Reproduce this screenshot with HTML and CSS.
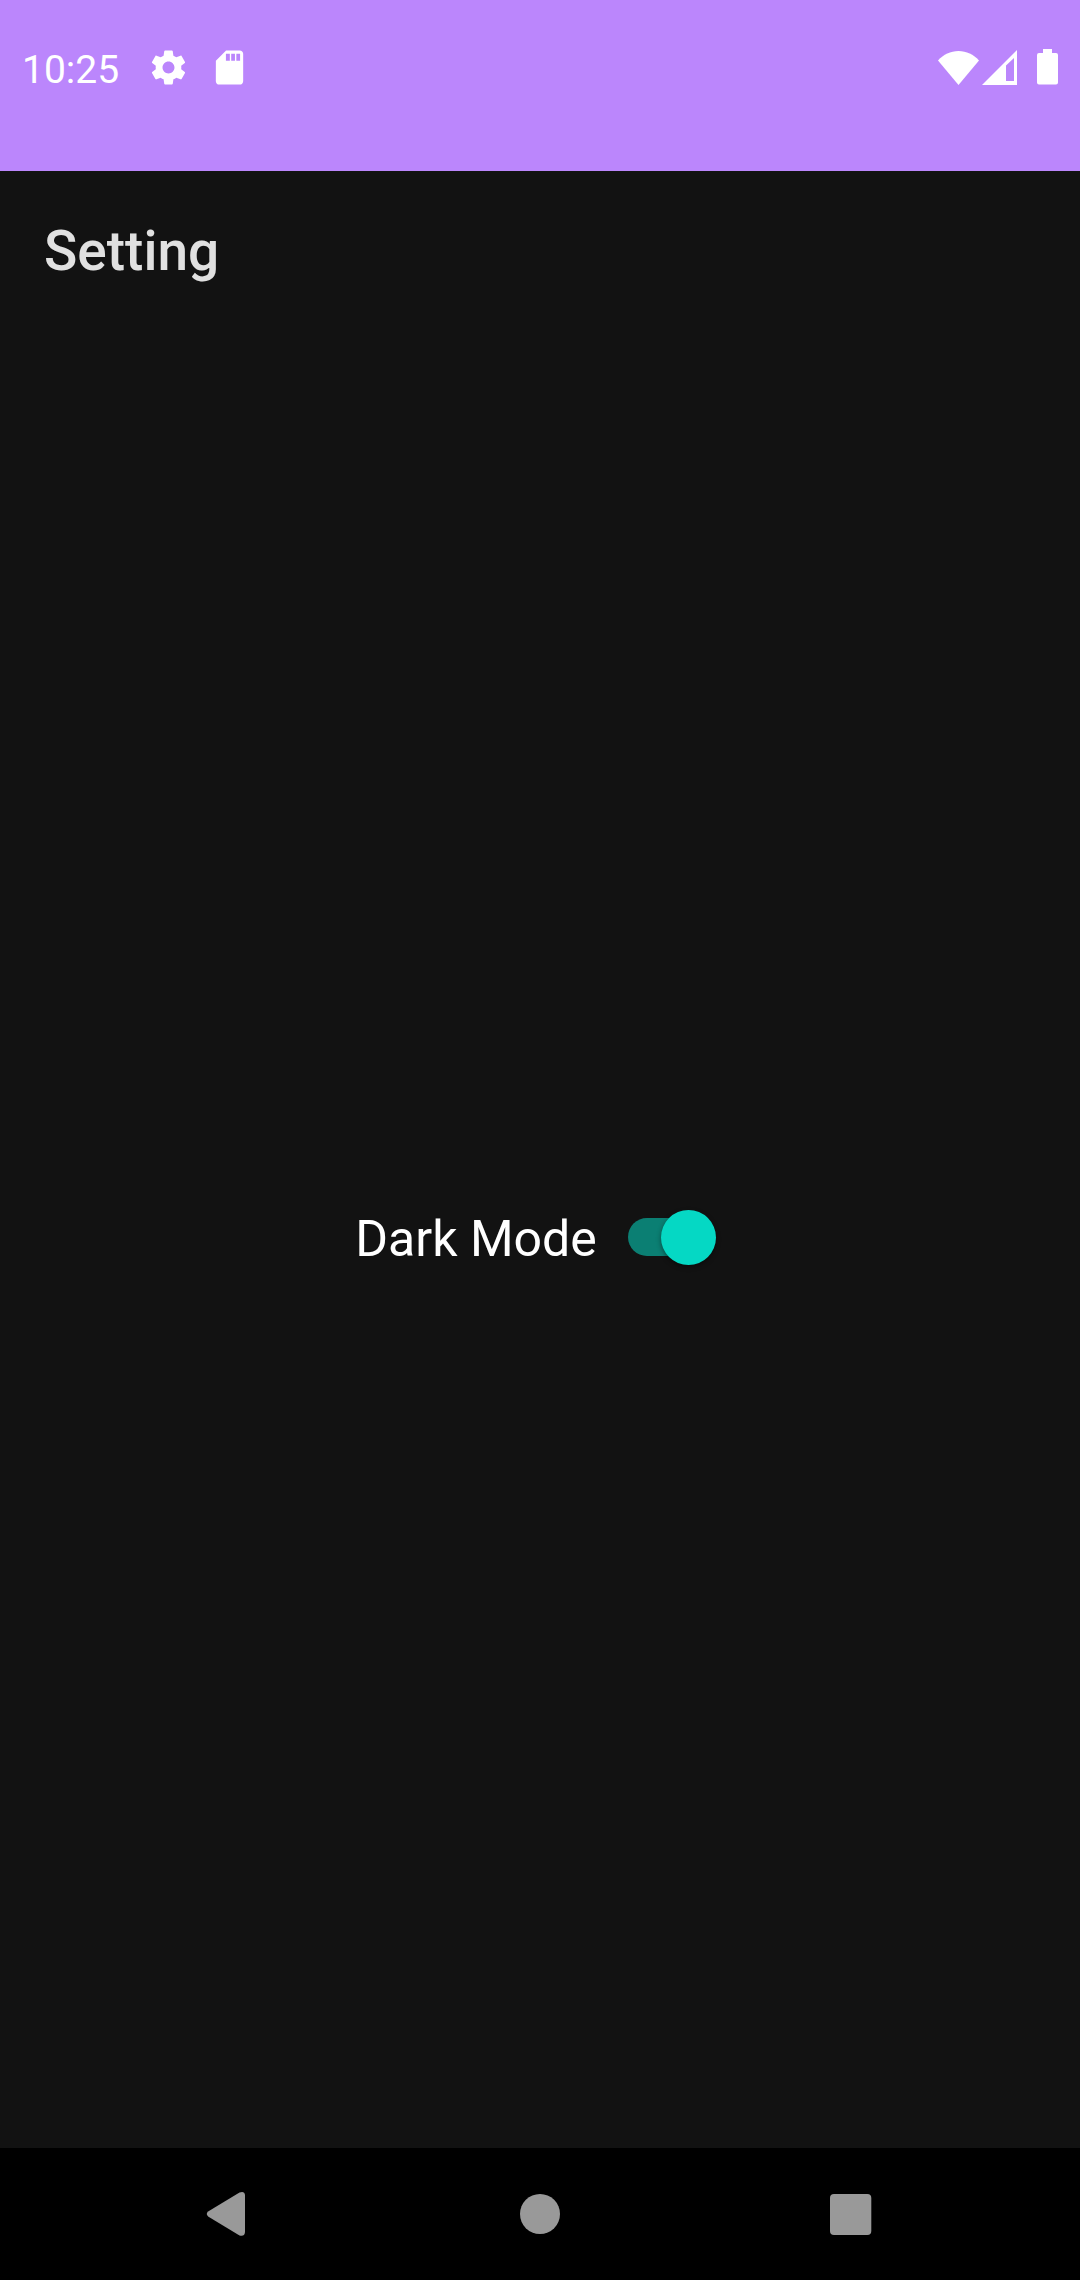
FILE: index.html
```html
<!DOCTYPE html>
<html lang="en">
<head>
<meta charset="utf-8">
<title>Setting</title>
<link rel="stylesheet" href="styles.css">
</head>
<body>
<div class="screen">
  <header class="status-bar">
    <div class="status-left">
      <span class="clock">10:25</span>
      <svg class="status-icon" viewBox="0 0 24 24"><path d="M19.43 12.98c.04-.32.07-.64.07-.98s-.03-.66-.07-.98l2.11-1.65c.19-.15.24-.42.12-.64l-2-3.46c-.12-.22-.39-.3-.61-.22l-2.49 1c-.52-.4-1.08-.73-1.69-.98l-.38-2.65C14.46 2.18 14.25 2 14 2h-4c-.25 0-.46.18-.49.42l-.38 2.65c-.61.25-1.17.59-1.69.98l-2.49-1c-.23-.09-.49 0-.61.22l-2 3.46c-.13.22-.07.49.12.64l2.11 1.65c-.04.32-.07.65-.07.98s.03.66.07.98l-2.11 1.65c-.19.15-.24.42-.12.64l2 3.46c.12.22.39.3.61.22l2.49-1c.52.4 1.08.73 1.69.98l.38 2.65c.03.24.24.42.49.42h4c.25 0 .46-.18.49-.42l.38-2.65c.61-.25 1.17-.59 1.69-.98l2.49 1c.23.09.49 0 .61-.22l2-3.46c.12-.22.07-.49-.12-.64l-2.11-1.65zM12 15.5c-1.93 0-3.5-1.57-3.5-3.5s1.57-3.5 3.5-3.5 3.5 1.57 3.5 3.5-1.57 3.5-3.5 3.5z"/></svg>
      <svg class="status-icon" viewBox="0 0 24 24"><path fill-rule="evenodd" d="M18 2h-8L4.020 8 4 20c0 1.100.9 2 2 2h12c1.100 0 2-.9 2-2V4c0-1.100-.9-2-2-2zM9.900 4h2.300v4H9.900zM13 4h2.200v4H13zM16 4h2.200v4H16z"/></svg>
    </div>
    <div class="status-right">
      <svg class="wifi" viewBox="0 0 41 34"><path d="M20.500 34L0 9.400C5.500 3.500 12.500 0 20.500 0S35.500 3.500 41 9.400z"/></svg>
      <svg class="signal" viewBox="0 0 35 35"><path fill-rule="evenodd" d="M35 0V35H0zM24 15.500V31H32V8z"/></svg>
      <svg class="battery" viewBox="0 0 21 36"><path d="M6 0h9v4h4a2 2 0 0 1 2 2v27.500a2 2 0 0 1-2 2H2a2 2 0 0 1-2-2V6a2 2 0 0 1 2-2h4z"/></svg>
    </div>
  </header>
  <h1 class="title">Setting</h1>
  <main class="content">
    <label class="setting">
      <span class="setting-label">Dark Mode</span>
      <span class="switch"><span class="thumb"></span></span>
    </label>
  </main>
  <nav class="nav-bar">
    <svg class="nav-icon" viewBox="0 0 46 46"><path d="M2.500 20.300L33.500 1.500Q38.500 -.3 39 4V41Q38.500 46 33.500 44.500L2.500 25.700Q-1 23 2.500 20.300z"/></svg>
    <svg class="nav-icon" viewBox="0 0 46 46"><circle cx="23" cy="23" r="20"/></svg>
    <svg class="nav-icon" viewBox="0 0 46 46"><rect x="2" y="3" width="41.300" height="41" rx="4"/></svg>
  </nav>
</div>
</body>
</html>
```
FILE: styles.css
```css
body {
  margin: 0;
  background: #121212;
  font-family: Roboto, "Liberation Sans", sans-serif;
}

svg {
  display: block;
}

.screen {
  display: flex;
  flex-direction: column;
  height: 2280px;
}

.status-bar {
  display: flex;
  justify-content: space-between;
  box-sizing: border-box;
  height: 171px;
  padding: 46px 22px 0;
  background: #bb86fc;
  color: #fff;
  fill: #fff;
}

.status-left,
.status-right {
  display: flex;
  align-items: center;
  height: 43px;
}

.clock {
  width: 104px;
  padding-top: 5px;
  font-size: 39px;
  line-height: 40px;
}

.status-icon {
  width: 41px;
  height: 41px;
  margin-left: 22px;
}

.status-icon + .status-icon {
  margin-left: 20px;
}

.wifi {
  width: 41px;
  height: 34px;
}

.signal {
  width: 35px;
  height: 35px;
  margin-left: 3px;
}

.battery {
  width: 21px;
  height: 36px;
  margin: 0 0 1px 20px;
}

.title {
  margin: 0;
  padding: 48px 44px 0;
  color: #e0e0e0;
  font-size: 55px;
  font-weight: 500;
  line-height: 64px;
}

.content {
  display: flex;
  flex: 1;
  justify-content: center;
  padding-top: 922px;
}

.setting {
  display: flex;
  align-items: center;
  height: 64px;
  margin-right: 9px;
}

.setting-label {
  padding-top: 3px;
  color: #fff;
  font-size: 50px;
  line-height: 58px;
}

.switch {
  display: flex;
  align-items: center;
  justify-content: flex-end;
  width: 88px;
  height: 38px;
  margin-left: 31px;
  border-radius: 19px;
  background: linear-gradient(90deg, #0b7f73 0 60px, transparent 60px);
}

.thumb {
  width: 55px;
  height: 55px;
  flex: none;
  border-radius: 50%;
  background: #05d8c4;
  box-shadow: 0 2px 5px rgba(0, 0, 0, 0.4);
}

.nav-bar {
  display: flex;
  align-items: center;
  justify-content: space-between;
  box-sizing: border-box;
  height: 132px;
  padding: 0 206px;
  background: #000;
  fill: #999;
}

.nav-icon {
  width: 46px;
  height: 46px;
}
```
